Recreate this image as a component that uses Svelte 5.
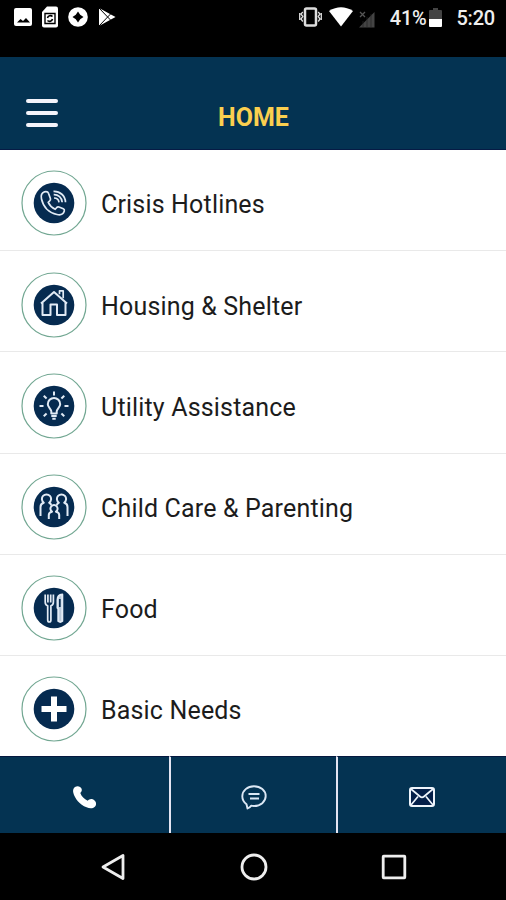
<script>
  const items = [
    { icon: 'phone', label: 'Crisis Hotlines' },
    { icon: 'house', label: 'Housing & Shelter' },
    { icon: 'bulb', label: 'Utility Assistance' },
    { icon: 'family', label: 'Child Care & Parenting' },
    { icon: 'food', label: 'Food' },
    { icon: 'plus', label: 'Basic Needs' }
  ];

  // rays around the light bulb, in degrees
  const rays = [-135, -90, -45, 0, 45, 135, 180];
</script>

<div class="screen">
  <div class="status">
    <div class="notifications">
      <svg width="18" height="20" viewBox="0 0 18 20">
        <rect x="0" y="1" width="18" height="18" rx="2" fill="#fff" />
        <path d="M3 15.500l3.500-3.500 2.500 2 3-3 4 4.500z" fill="#000" />
      </svg>
      <svg width="16" height="22" viewBox="0 0 16 22">
        <path d="M5 0.500h9q2 0 2 2v17q0 2-2 2H2q-2 0-2-2V6z" fill="#fff" />
        <path d="M3 7.500h10v10H3z" fill="none" stroke="#000" stroke-width="1.400" />
        <path d="M10.500 10.500a3 3 0 0 0-5 1.500M5.500 14.500a3 3 0 0 0 5-1.500" fill="none" stroke="#000" stroke-width="1.600" />
      </svg>
      <svg width="20" height="20" viewBox="0 0 20 20">
        <circle cx="10" cy="10" r="9.800" fill="#fff" />
        <path d="M10 4.500l2.200 3.300 3.300 2.200-3.300 2.200L10 15.500l-2.200-3.300L4.500 10l3.300-2.200z" fill="#000" />
      </svg>
      <svg width="18" height="20" viewBox="0 0 18 20">
        <path d="M1 1l16.500 9L1 19z" fill="#fff" />
        <path d="M1 1l11.500 12M1 19L12.500 7" stroke="#000" stroke-width="1" />
      </svg>
    </div>
    <div class="system">
      <svg class="vibrate" width="23" height="20" viewBox="0 0 23 20">
        <rect x="6" y="1.500" width="11" height="17" rx="1.500" fill="none" stroke="#ddd" stroke-width="2.500" />
        <path d="M3.800 5l-1.800 2 1.800 2.500-1.800 2.500 1.800 2.500M.7 6v7M19.200 5l1.800 2-1.800 2.500 1.800 2.500-1.800 2.500M22.300 6v7" fill="none" stroke="#ddd" stroke-width="1.300" />
      </svg>
      <svg class="wifi" width="24" height="20" viewBox="0 0 24 20">
        <path d="M0 4Q12-3.500 24 4L12 19.500z" fill="#fff" />
      </svg>
      <svg class="signal" width="16" height="17" viewBox="0 0 16 17">
        <path d="M15.500 1v15.500H0z" fill="#444" />
        <path d="M1 1l5 5M6 1L1 6" stroke="#555" stroke-width="1.300" />
        <path d="M4 10v7M8 6v11M12 3v14" stroke="#222" stroke-width=".7" />
      </svg>
      <span class="percent">41%</span>
      <svg class="battery" width="13" height="19" viewBox="0 0 13 19">
        <path d="M1 2h3V0h5v2h3q1 0 1 1v8H0V3q0-1 1-1z" fill="#444" />
        <path d="M0 11h13v7q0 1-1 1H1q-1 0-1-1z" fill="#fff" />
      </svg>
      <span class="time">5:20</span>
    </div>
  </div>

  <header>
    <button class="menu" aria-label="Menu">
      <span></span>
      <span></span>
      <span></span>
    </button>
    <h1>HOME</h1>
  </header>

  <ul>
    {#each items as item}
      <li>
        <svg class="badge" width="66" height="66" viewBox="0 0 66 66">
          <circle cx="33" cy="33" r="32" fill="#fff" stroke="#72a792" stroke-width="1.200" />
          <circle cx="33" cy="33" r="20.300" fill="#062b50" />
          <g class="glyph">
            {#if item.icon === 'phone'}
              <path d="M23.500 21.800c-3 1.200-3.800 3.800-3 7.200 1.800 8 7.500 14 15.500 15.500 3.500.8 6.300-.3 7.300-3.500.3-1-.2-1.800-1-2.200l-4.300-1.800c-1-.4-1.800-.1-2.500.8l-1.300 1.500c-3.300-1.600-5.600-4-7-7l1.500-1.400c.8-.7 1-1.400.7-2.400l-1.900-5.200c-.4-1.200-1.500-2-4-1.500z" />
              <path d="M32.500 21.300c6.500-.3 11.800 4.500 12 11M32.700 24.700c4.600-.2 8.200 3 8.500 7.600M33 28c2.800 0 4.700 1.700 5 4.300" />
            {:else if item.icon === 'house'}
              <path class="bold" d="M21.500 30.500V43h8V32.500h6.500V43h8.500V30.500" />
              <path class="bold" d="M20 31.500L33 20l13 11.500" />
              <path d="M38.500 22.300v-3.500h3.700v7.500" />
            {:else if item.icon === 'bulb'}
              <path class="bold" d="M30.300 40.500v-2.300c0-2.200-3.500-4-3.500-7a6.200 6.200 0 0 1 12.400 0c0 3-3.500 4.800-3.500 7v2.300z" />
              <path class="bold" d="M30.300 43h5.400M31.300 45.800h3.400" />
              {#each rays as angle}
                <path class="bold" d="M43.500 33h4" transform="rotate({angle} 33 33)" />
              {/each}
            {:else if item.icon === 'family'}
              <path class="bold" d="M19.500 42v-9q0-3.500 3.300-4.300a4.600 4.600 0 1 1 5.400 0q1.800.7 2 2.800" />
              <path class="bold" d="M46.500 42v-9q0-3.500-3.300-4.300a4.600 4.600 0 1 0-5.400 0q-1.800.7-2 2.800" />
              <path class="bold" d="M27.800 45v-4q0-2.600 3.200-3.300a3.600 3.600 0 1 1 4 0q3.200.7 3.200 3.300v4" />
            {:else if item.icon === 'food'}
              <path d="M24.200 19.500v7.500q0 3 2.500 3.700V45q0 2 1.600 2t1.600-2V30.700q2.500-.7 2.500-3.700v-7.500M26.900 19.500v8M29.700 19.500v8" />
              <path class="blade" d="M36.500 33v-8q0-5.500 4.800-5.500V46q-2 1.700-4 0V34z" />
              <path d="M38.800 24v8" class="slot" />
            {:else}
              <path class="cross" d="M33 20.500v25M20.500 33h25" />
            {/if}
          </g>
        </svg>
        <span class="label">{item.label}</span>
      </li>
    {/each}
  </ul>

  <div class="tabs">
    <button aria-label="Call">
      <svg width="25" height="25" viewBox="0 0 25 25">
        <path d="M3 2C5.300.3 8.600 1.200 9.600 3.700c.6 1.700 0 3-1.300 4.300 1.200 3.300 4 6.300 7.400 7.700 1.300-1.500 3.200-2.300 5-1.400 2.800 1.200 4.300 4.200 2.800 6.600-1.800 2.700-5.500 2.900-8.900 1.400C7.600 19.700 2.800 13.500 1.300 7.700.7 5.300 1.300 3.300 3 2z" fill="#fff" />
      </svg>
    </button>
    <button aria-label="Message">
      <svg width="26" height="26" viewBox="0 0 26 26">
        <path d="M5.500 20.200C2.700 18.200 1.300 15.500 1.300 12.300 1.300 6.500 6.500 2.300 13 2.300s11.700 4.200 11.700 9.800S19.500 22 13 22q-1.500 0-2.700-.3-1.300 1.700-3.800 2.800z" fill="none" stroke="#dce8f5" stroke-width="1.900" stroke-linejoin="round" />
        <path d="M7.500 10h11M9 14.500h9" stroke="#dce8f5" stroke-width="1.900" />
      </svg>
    </button>
    <button aria-label="Email">
      <svg width="26" height="20" viewBox="0 0 26 20">
        <rect x="1" y="1" width="24" height="18" rx="2" fill="#041f49" stroke="#eef4fb" stroke-width="2" />
        <path d="M2 2l9 7.500q2 1.700 4 0L24 2M2 18l7-8.500M24 18l-7-8.500" fill="none" stroke="#eef4fb" stroke-width="1.700" />
      </svg>
    </button>
  </div>

  <div class="navbar">
    <svg width="26" height="28" viewBox="0 0 26 28">
      <path d="M23 2.500v23L3 14z" />
    </svg>
    <svg width="28" height="28" viewBox="0 0 28 28">
      <circle cx="14" cy="14" r="12" />
    </svg>
    <svg width="26" height="28" viewBox="0 0 26 28">
      <rect x="2.200" y="3.200" width="21.600" height="21.600" rx=".5" />
    </svg>
  </div>
</div>

<style>
  :global(body) {
    margin: 0;
    background: #000;
  }

  .screen {
    width: 506px;
    height: 900px;
    display: flex;
    flex-direction: column;
    overflow: hidden;
    background: #fff;
    font-family: Roboto, "Liberation Sans", sans-serif;
  }

  svg {
    display: block;
    flex: none;
  }

  button {
    border: 0;
    padding: 0;
    background: none;
  }

  .status {
    height: 57px;
    box-sizing: border-box;
    padding: 0 11px 23px 14px;
    display: flex;
    justify-content: space-between;
    background: #000;
    color: #eee;
    font-size: 20px;
    font-weight: 500;
  }

  .notifications,
  .system {
    display: flex;
    align-items: center;
  }

  .notifications {
    gap: 10px;
  }

  .wifi {
    margin-left: 7px;
  }

  .signal {
    margin: 4px 0 0 6px;
  }

  .percent {
    margin: 2px 3px 0 15px;
    letter-spacing: -0.300px;
  }

  .time {
    margin: 2px 0 0 14px;
    letter-spacing: -0.200px;
  }

  header {
    height: 93px;
    flex: none;
    box-sizing: border-box;
    padding: 19px 0 0 26px;
    display: grid;
    grid-template-columns: 33px 1fr 58px;
    align-items: center;
    background: #043352;
    border-bottom: 1px solid #061b45;
  }

  .menu {
    display: flex;
    flex-direction: column;
    gap: 8px;
  }

  .menu span {
    height: 4px;
    width: 32px;
    border-radius: 2px;
    background: #f4f4fb;
  }

  h1 {
    margin: 10px 0 0;
    text-align: center;
    color: #fbcf4f;
    font-size: 25px;
    line-height: 30px;
    font-weight: 700;
  }

  ul {
    height: 606px;
    flex: none;
    margin: 0;
    padding: 0;
    list-style: none;
    overflow: hidden;
  }

  li {
    height: 101.200px;
    box-sizing: border-box;
    padding: 6.500px 0 0 21px;
    display: flex;
    align-items: center;
    gap: 14px;
    border-bottom: 1px solid #e9e9e9;
    color: #1c1c1c;
    font-size: 25px;
    letter-spacing: 0.170px;
  }

  li:last-child {
    border-bottom-color: transparent;
  }

  .label {
    padding-top: 3px;
  }

  .glyph {
    fill: none;
    stroke: #e2ebf5;
    stroke-width: 1.700;
    stroke-linejoin: round;
  }

  .bold {
    stroke-width: 2;
  }

  .blade {
    stroke-width: 2;
    fill: #b9c8d8;
  }

  .slot {
    stroke: #062b50;
  }

  .cross {
    stroke: #fff;
    stroke-width: 6;
  }

  .tabs {
    height: 77px;
    flex: none;
    display: grid;
    grid-template-columns: 169px 167px 170px;
    background: #043352;
  }

  .tabs button {
    display: flex;
    align-items: center;
    justify-content: center;
    padding-top: 4px;
    border-top: 1px solid #04183f;
  }

  .tabs button + button {
    border-left: 2px solid #e4e4f2;
  }

  .navbar {
    height: 67px;
    box-sizing: border-box;
    padding: 0 99px 0 100px;
    display: flex;
    align-items: center;
    justify-content: space-between;
    background: #000;
  }

  .navbar svg {
    fill: none;
    stroke: #eee;
    stroke-width: 2.800;
    stroke-linejoin: round;
  }
</style>
